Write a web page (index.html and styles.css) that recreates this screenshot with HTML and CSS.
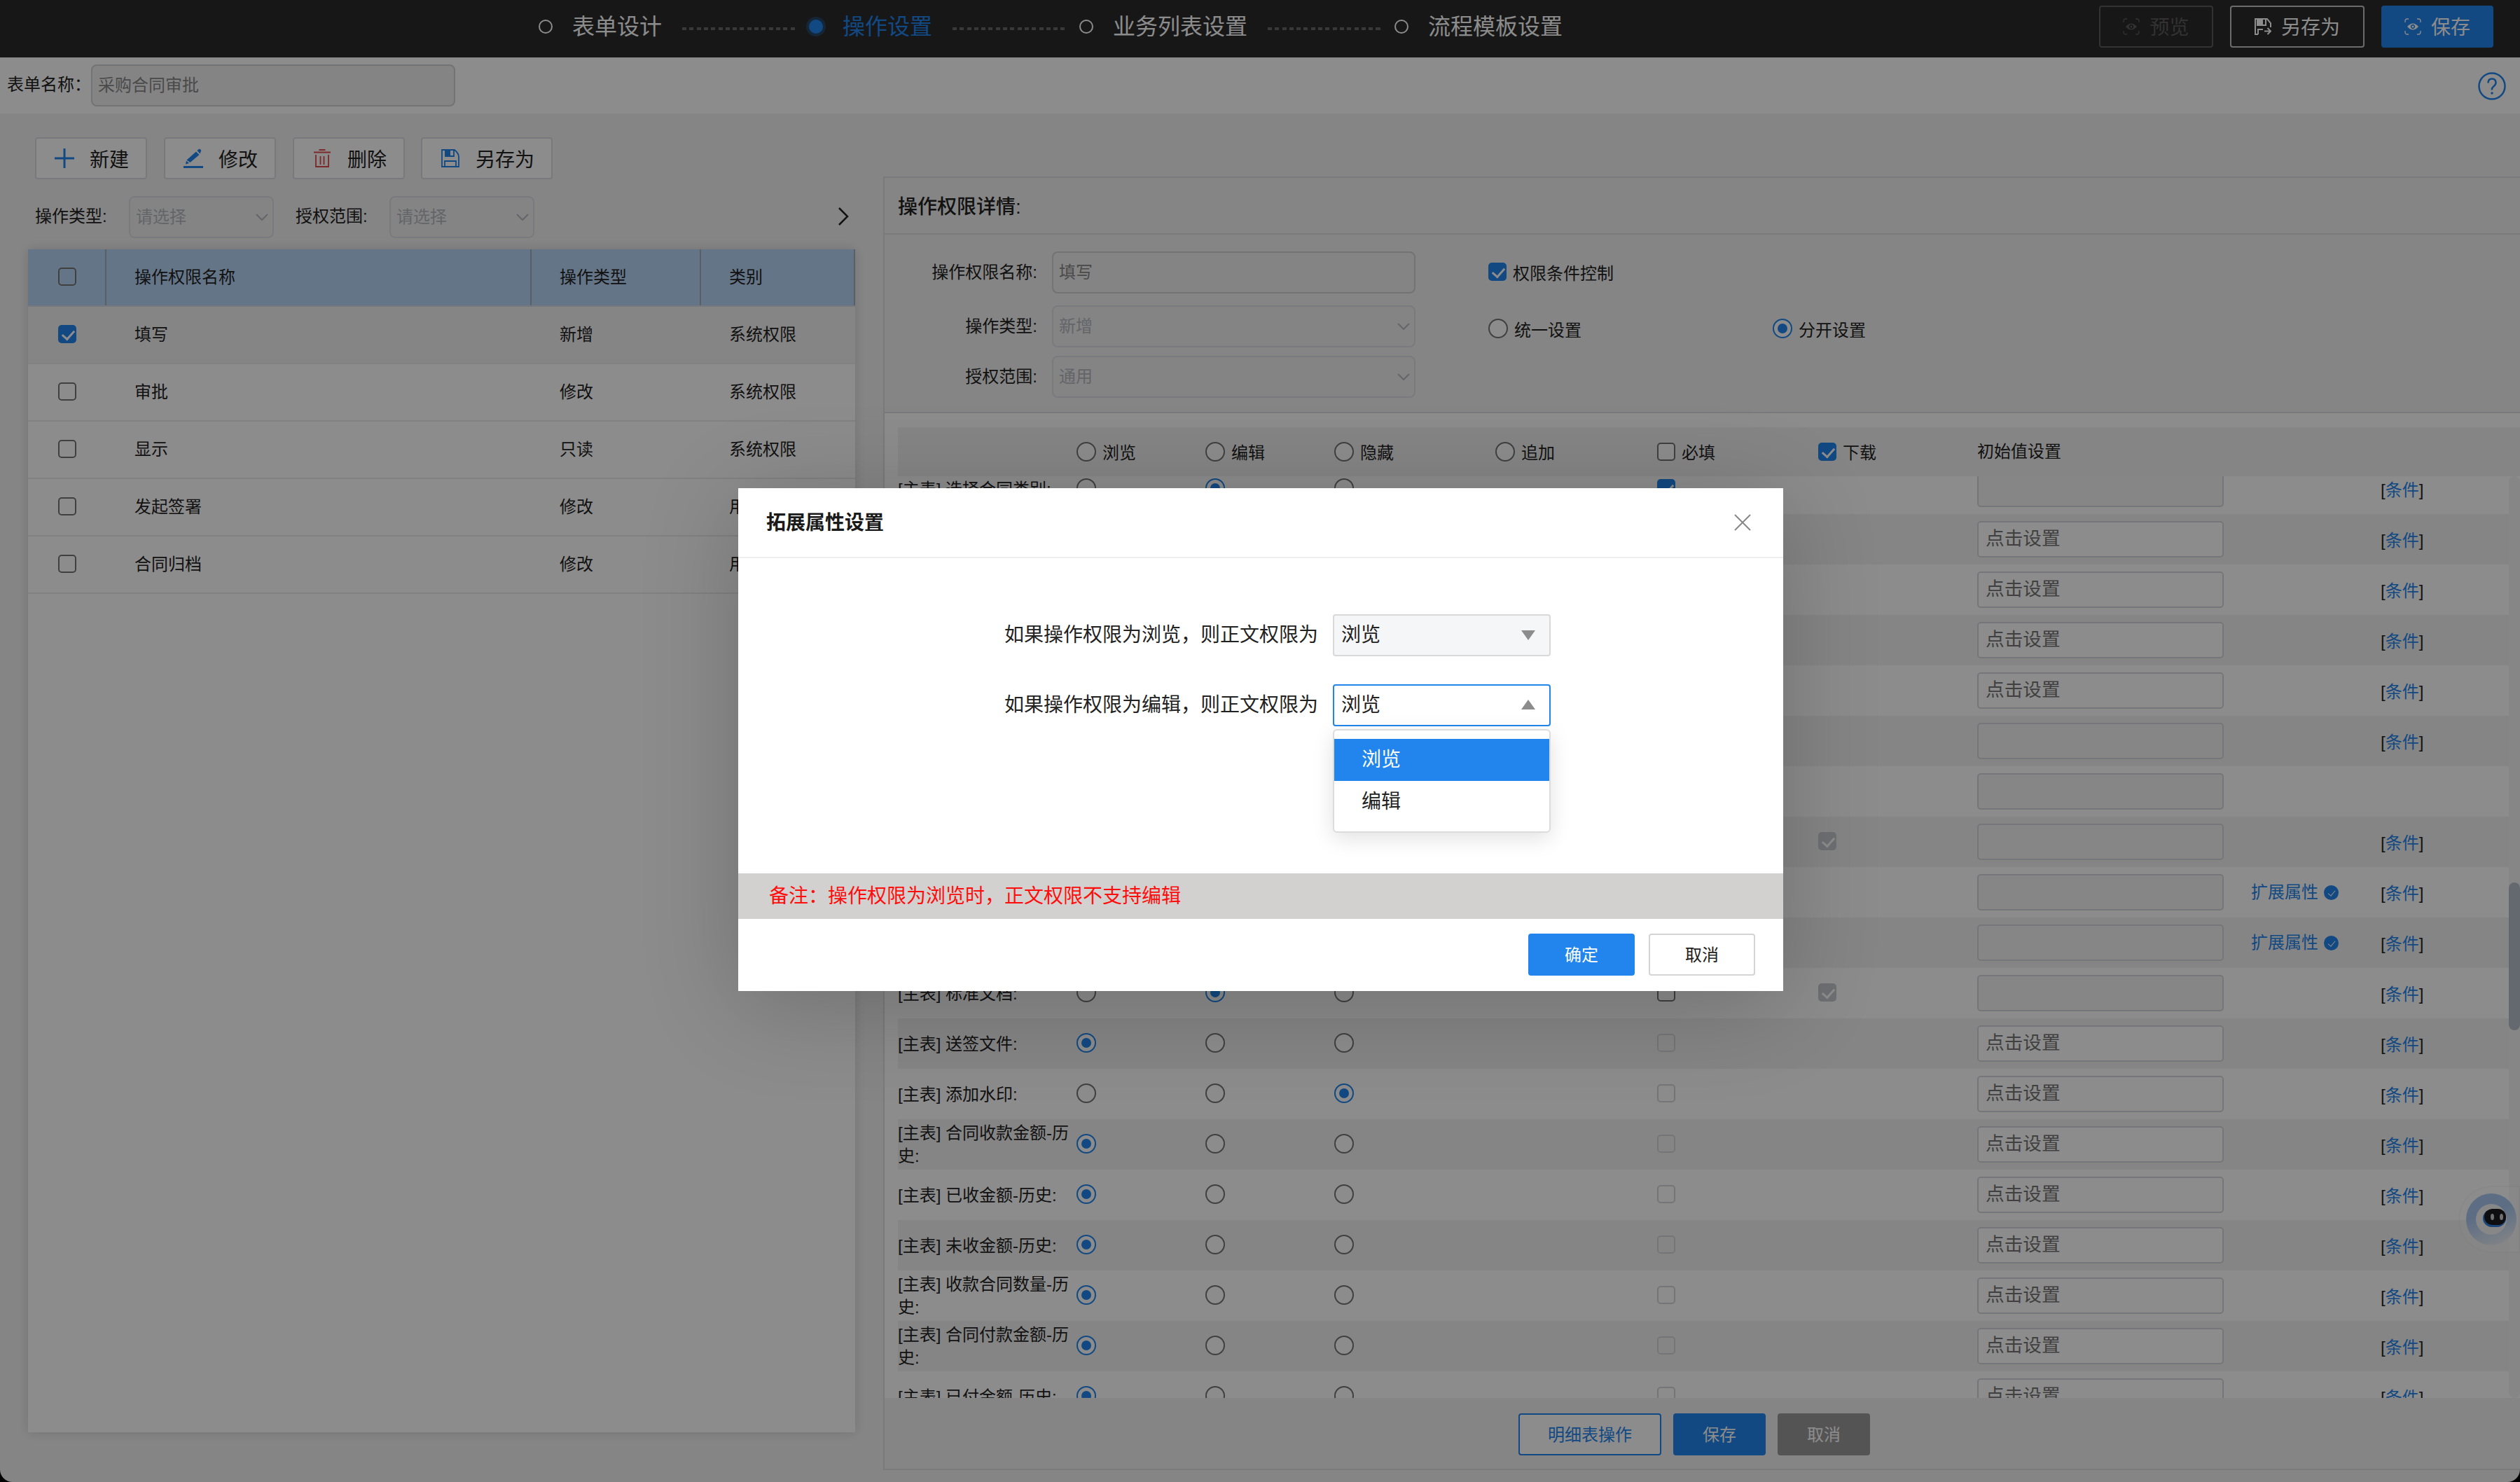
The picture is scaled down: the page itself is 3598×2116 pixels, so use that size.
FILE: index.html
```html
<!DOCTYPE html>
<html lang="zh-CN">

<head>
    <meta charset="UTF-8">
    <meta name="viewport" content="width=device-width, initial-scale=1.0">
    <title>操作设置</title>
    <link rel="stylesheet" href="styles.css">
</head>

<body>
    <div class="page">
        <div class="topbar">
            <div class="steps">
                <div class="step"><i class="dot"></i><span>表单设计</span></div>
                <div class="line"></div>
                <div class="step active"><i class="dot"></i><span>操作设置</span></div>
                <div class="line"></div>
                <div class="step"><i class="dot"></i><span>业务列表设置</span></div>
                <div class="line"></div>
                <div class="step"><i class="dot"></i><span>流程模板设置</span></div>
            </div>
            <div class="top-actions">
                <button class="top-btn preview">
                    <svg viewBox="0 0 24 24"><path class="stroke thin" d="M1 6V4q0-3 3-3h2M18 1h2q3 0 3 3v2M23 18v2q0 3-3 3h-2M6 23H4q-3 0-3-3v-2"/><path class="fill" fill-rule="evenodd" d="M4 12q8-9 16 0q-8 9-16 0zM12 8.800a3.200 3.200 0 1 0 .01 0z"/><circle class="fill" cx="12" cy="12" r="1.500"/></svg>
                    <span>预览</span>
                </button>
                <button class="top-btn saveas">
                    <svg viewBox="0 0 24 24"><path class="stroke" d="M5 23H1V1h17l5 6v6M4 1v9h12V1M5 23v-7h7M14 18.500h9M18.500 14l4.500 4.500-4.500 4.500"/><path class="fill" d="M4 1h8v8H4z"/></svg>
                    <span>另存为</span>
                </button>
                <button class="top-btn primary">
                    <svg viewBox="0 0 24 24"><path class="stroke thin" d="M1 6V4q0-3 3-3h2M18 1h2q3 0 3 3v2M23 18v2q0 3-3 3h-2M6 23H4q-3 0-3-3v-2"/><path class="fill" fill-rule="evenodd" d="M4 12q8-9 16 0q-8 9-16 0zM12 8.800a3.200 3.200 0 1 0 .01 0z"/><circle class="fill" cx="12" cy="12" r="1.500"/></svg>
                    <span>保存</span>
                </button>
            </div>
        </div>

        <div class="namebar">
            <label>表单名称：</label>
            <div class="field form-name">采购合同审批</div>
            <svg class="help" viewBox="0 0 40 40"><circle cx="20" cy="20" r="18.500"/><path d="M14.500 15.500q0-6 5.500-6t5.500 5.500q0 3-3 5.200t-2.500 5.300"/><circle class="point" cx="20" cy="30" r="1.800"/></svg>
        </div>

        <div class="content">
            <div class="left">
                <div class="toolbar">
                    <button><svg viewBox="0 0 28 28"><path d="M14 0v28M0 14h28" stroke-width="3"/></svg>新建</button>
                    <button><svg viewBox="0 0 28 28"><path d="M0 26.500h28" stroke-width="3"/><path class="solid" d="M18 4.500l4.500 4.500L9.500 20l-5-3.500zM19.500 3l1.500-1.500q2-1.500 3.500 0t0 3.500L23.500 7.500zM4 17.500l4 3.500-5 1.500z"/></svg>修改</button>
                    <button class="danger"><svg viewBox="0 0 28 28"><path d="M2 5.500h24M9.500 2h9M5 9v17h18V9M11.500 11v12M16.500 11v12" stroke-width="1.800"/></svg>删除</button>
                    <button><svg viewBox="0 0 28 28"><path d="M2 2h18q6 5 6 10v14H2zM6 26v-8h16v8M19 2v9H7V2" stroke-width="1.800"/><path class="solid" d="M6 2h8v9H6z"/></svg>另存为</button>
                </div>
                <div class="filters">
                    <label>操作类型:</label>
                    <div class="field select">请选择<svg viewBox="0 0 18 10"><path d="M1 1l8 8 8-8"/></svg></div>
                    <label>授权范围:</label>
                    <div class="field select">请选择<svg viewBox="0 0 18 10"><path d="M1 1l8 8 8-8"/></svg></div>
                    <svg class="expand" viewBox="0 0 16 26"><path d="M2 1l12 12L2 25"/></svg>
                </div>
                <div class="perm-table">
                    <div class="perm-row head">
                        <div><i class="check"></i></div>
                        <div>操作权限名称</div>
                        <div>操作类型</div>
                        <div>类别</div>
                    </div>
                    <div class="perm-row selected">
                        <div><i class="check on"></i></div>
                        <div>填写</div>
                        <div>新增</div>
                        <div>系统权限</div>
                    </div>
                    <div class="perm-row">
                        <div><i class="check"></i></div>
                        <div>审批</div>
                        <div>修改</div>
                        <div>系统权限</div>
                    </div>
                    <div class="perm-row">
                        <div><i class="check"></i></div>
                        <div>显示</div>
                        <div>只读</div>
                        <div>系统权限</div>
                    </div>
                    <div class="perm-row">
                        <div><i class="check"></i></div>
                        <div>发起签署</div>
                        <div>修改</div>
                        <div>用户权限</div>
                    </div>
                    <div class="perm-row">
                        <div><i class="check"></i></div>
                        <div>合同归档</div>
                        <div>修改</div>
                        <div>用户权限</div>
                    </div>
                </div>
            </div>

            <div class="right">
                <div class="detail-title">操作权限详情:</div>
                <div class="detail-form">
                    <div class="form-col">
                        <div class="form-row"><label>操作权限名称:</label><div class="field plain">填写</div></div>
                        <div class="form-row"><label>操作类型:</label><div class="field select">新增<svg viewBox="0 0 18 10"><path d="M1 1l8 8 8-8"/></svg></div></div>
                        <div class="form-row"><label>授权范围:</label><div class="field select">通用<svg viewBox="0 0 18 10"><path d="M1 1l8 8 8-8"/></svg></div></div>
                    </div>
                    <div class="option-col">
                        <div class="option"><i class="check on"></i><span>权限条件控制</span></div>
                        <div class="options">
                            <div class="option"><i class="radio"></i><span>统一设置</span></div>
                            <div class="option"><i class="radio on"></i><span>分开设置</span></div>
                        </div>
                    </div>
                </div>
                <div class="fields">
                    <div class="field-row field-head">
                        <div></div>
                        <div class="option"><i class="radio"></i><span>浏览</span></div>
                        <div class="option"><i class="radio"></i><span>编辑</span></div>
                        <div class="option"><i class="radio"></i><span>隐藏</span></div>
                        <div class="option"><i class="radio"></i><span>追加</span></div>
                        <div class="option"><i class="check"></i><span>必填</span></div>
                        <div class="option"><i class="check on"></i><span>下载</span></div>
                        <div>初始值设置</div>
                    </div>
                    <div class="field-scroll">
                        <div class="field-list" id="field-list"></div>
                        <div class="scrollbar"><div class="thumb"></div></div>
                    </div>
                </div>
                <div class="detail-footer">
                    <button class="btn outline">明细表操作</button>
                    <button class="btn primary">保存</button>
                    <button class="btn gray">取消</button>
                </div>
            </div>
        </div>

        <div class="robot">
            <div class="robot-ring"><div class="robot-head"><div class="robot-face"><i></i><i></i></div></div></div>
        </div>
    </div>

    <div class="mask">
        <div class="modal">
            <div class="modal-header">
                <h3>拓展属性设置</h3>
                <svg class="close" viewBox="0 0 24 24"><path d="M1 1l22 22M23 1L1 23"/></svg>
            </div>
            <div class="modal-body">
                <div class="rule">
                    <span>如果操作权限为浏览，则正文权限为</span>
                    <div class="picker">浏览<i class="down"></i></div>
                </div>
                <div class="rule">
                    <span>如果操作权限为编辑，则正文权限为</span>
                    <div class="picker open">浏览<i class="up"></i>
                        <div class="menu">
                            <div class="menu-item current">浏览</div>
                            <div class="menu-item">编辑</div>
                        </div>
                    </div>
                </div>
            </div>
            <div class="note">备注：操作权限为浏览时，正文权限不支持编辑</div>
            <div class="modal-footer">
                <button class="btn primary">确定</button>
                <button class="btn">取消</button>
            </div>
        </div>
    </div>

    <script src="script.js"></script>
</body>

</html>
```

FILE: styles.css
```css
* {
    margin: 0;
    padding: 0;
    box-sizing: border-box;
}

body {
    background-color: #000;
    font-family: "Liberation Sans", "Noto Sans CJK SC", sans-serif;
    font-size: 24px;
    line-height: 1.4;
    color: #222;
    overflow: hidden;
}

button {
    font-family: inherit;
    font-size: inherit;
    color: inherit;
}

svg {
    fill: none;
    flex: none;
}

.page {
    width: 3598px;
    height: 2116px;
    display: flex;
    flex-direction: column;
    background-color: #f3f3f3;
    border-radius: 0 0 18px 18px;
    overflow: hidden;
}

/* top bar */
.topbar {
    height: 82px;
    flex: none;
    display: flex;
    justify-content: space-between;
    align-items: flex-start;
    background-color: #2a2a2a;
    padding: 8px 38px 0 769px;
    color: #fff;
}

.steps {
    display: flex;
    align-items: center;
    height: 61px;
}

.step {
    display: flex;
    align-items: center;
    gap: 28px;
    font-size: 32px;
    margin-right: 1px;
}

.step .dot {
    width: 20px;
    height: 20px;
    border: 2px solid #fff;
    border-radius: 50%;
}

.step.active {
    color: #2185ed;
}

.step.active .dot {
    background-color: #2185ed;
    border-color: #2185ed;
    box-shadow: 0 0 0 4px rgba(33, 133, 237, 0.3);
}

.line {
    width: 161px;
    height: 4px;
    margin: 5px 20px 0 28px;
    background: repeating-linear-gradient(90deg, #666 0 6px, transparent 6px 10.300px);
}

.top-actions {
    display: flex;
}

.top-btn {
    height: 60px;
    display: flex;
    align-items: center;
    justify-content: center;
    gap: 14px;
    background: none;
    border: 2px solid #fff;
    border-radius: 4px;
    font-size: 28px;
}

.top-btn svg {
    width: 24px;
    height: 24px;
}

.top-btn span {
    margin-top: -2px;
}

.top-btn .stroke {
    stroke: currentColor;
    stroke-width: 2;
}

.top-btn .thin {
    stroke-width: 1.300;
}

.top-btn .fill {
    fill: currentColor;
}

.top-btn.preview {
    width: 163px;
    color: #5c5c5c;
    border-color: #5c5c5c;
}

.top-btn.saveas {
    width: 192px;
    margin: 0 24px;
    border-color: #c4c4c4;
}

.top-btn.primary {
    width: 160px;
    background-color: #2185ed;
    border-color: #2185ed;
}

/* form name */
.namebar {
    height: 80px;
    flex: none;
    display: flex;
    align-items: center;
    background-color: #fff;
    padding: 0 20px 0 10px;
}

.namebar label {
    width: 120px;
    margin-top: -2px;
}

.help {
    width: 40px;
    height: 40px;
    margin-left: auto;
    margin-top: 2px;
    stroke: #2185ed;
    stroke-width: 2.500;
}

.help .point {
    fill: #2185ed;
    stroke: none;
}

.field {
    height: 60px;
    display: flex;
    align-items: center;
    justify-content: space-between;
    padding: 0 10px 0 8px;
    border: 2px solid #dcdfe6;
    border-radius: 8px;
    background-color: #f1f1f1;
    color: #888;
}

.field.select {
    color: #b4b8c0;
    padding-right: 6px;
}

.field svg {
    width: 18px;
    height: 10px;
    stroke: #b4b8c0;
    stroke-width: 2;
}

.form-name {
    width: 520px;
    border-color: #cfd1d6;
}

.field.plain {
    border-color: #cfd1d6;
}

/* shared marks */
.check,
.radio {
    display: block;
    flex: none;
    position: relative;
    border: 2px solid #767676;
    background-color: #fff;
}

.check {
    width: 26px;
    height: 26px;
    border-radius: 5px;
}

.check.on {
    background-color: #2185ed;
    border-color: #2185ed;
}

.check.on::after {
    content: "";
    position: absolute;
    left: 7px;
    top: 2px;
    width: 8px;
    height: 14px;
    border: solid #fff;
    border-width: 0 3px 3px 0;
    transform: rotate(42deg);
}

.check.disabled {
    border-color: #d5d6da;
    background-color: transparent;
}

.check.on.disabled {
    background-color: #c9cbd1;
    border-color: #c9cbd1;
}

.radio {
    width: 28px;
    height: 28px;
    border-radius: 50%;
}

.radio.on {
    border-color: #2185ed;
}

.radio.on::after {
    content: "";
    position: absolute;
    left: 5px;
    top: 5px;
    width: 14px;
    height: 14px;
    border-radius: 50%;
    background-color: #2185ed;
}

.option {
    display: flex;
    align-items: center;
    gap: 9px;
}

.option span {
    margin-top: 5px;
}

/* left list */
.content {
    flex: 1;
    min-height: 0;
    display: flex;
}

.left {
    width: 1221px;
    padding: 34px 0 71px 40px;
    display: flex;
    flex-direction: column;
}

.toolbar {
    display: flex;
    gap: 24px;
    padding-left: 10px;
}

.toolbar button {
    height: 60px;
    display: flex;
    align-items: center;
    gap: 22px;
    padding: 0 24px 0 26px;
    border: 2px solid #dcdde4;
    border-radius: 4px;
    background-color: #fff;
    font-size: 28px;
}

.toolbar button:last-child {
    margin-left: -1px;
}

.toolbar svg {
    width: 28px;
    height: 28px;
    stroke: #2185ed;
}

.toolbar .solid {
    fill: #2185ed;
    stroke: none;
}

.toolbar .danger svg {
    stroke: #e24a4a;
}

.filters {
    display: flex;
    align-items: center;
    height: 60px;
    margin: 24px 0 16px;
    padding: 0 9px 0 10px;
}

.filters .select {
    width: 207px;
    margin-right: 31px;
}

.filters label {
    width: 134px;
    margin-top: -2px;
}

.expand {
    width: 16px;
    height: 26px;
    margin-left: auto;
    margin-top: -2px;
    stroke: #222;
    stroke-width: 2.500;
}

.perm-table {
    flex: 1;
    background-color: #fff;
    box-shadow: 0 0 16px rgba(0, 0, 0, 0.14);
}

.perm-row {
    height: 82px;
    display: grid;
    grid-template-columns: 112px 607px 242px 220px;
    align-items: center;
    border-bottom: 2px solid #ebebeb;
}

.perm-row > div {
    height: 100%;
    display: flex;
    align-items: center;
    padding-left: 40px;
}

.perm-row > div:first-child {
    padding-left: 43px;
}

.perm-row.head {
    background-color: #b9d6f8;
    border-bottom-color: #d5dbe3;
}

.perm-row.head > div {
    border-right: 2px solid #a3adb8;
}

.perm-row .check {
    margin-bottom: 2px;
}

.perm-row.head .check {
    background: none;
}

.perm-row.selected {
    background-color: #f2f2f2;
}

/* right detail */
.right {
    margin: 90px 0 17px 40px;
    flex: 1;
    min-width: 0;
    display: flex;
    flex-direction: column;
    border: 2px solid #dfdfe4;
    border-right: none;
}

.detail-title {
    height: 81px;
    flex: none;
    line-height: 83px;
    padding-left: 19px;
    font-size: 28px;
    font-weight: 500;
    border-bottom: 2px solid #dfdfe4;
}

.detail-form {
    height: 255px;
    flex: none;
    display: flex;
    padding-top: 24px;
    border-bottom: 2px solid #dfdfe4;
}

.form-col {
    width: 862px;
}

.form-row {
    display: flex;
    align-items: center;
    margin-bottom: 12px;
}

.form-row:first-child {
    margin-bottom: 17px;
}

.form-row label {
    width: 218px;
    margin-right: 21px;
    text-align: right;
}

.form-row .field {
    width: 519px;
}

.option-col {
    padding-top: 10px;
}

.options {
    display: flex;
    gap: 273px;
    margin-top: 42px;
}

.fields {
    flex: 1;
    min-height: 0;
    display: flex;
    flex-direction: column;
    padding: 20px 0 0 19px;
    background-color: #fff;
}

.field-row {
    height: 72px;
    display: grid;
    grid-template-columns: 255px 184px 184px 230px 231px 230px 227px 391px 185px 1fr;
    align-items: center;
}

.field-head {
    height: 70px;
    background-color: #f3f3f3;
    flex: none;
    padding-bottom: 1px;
}

.field-scroll {
    flex: 1;
    min-height: 0;
    display: flex;
    overflow: hidden;
}

.field-list {
    flex: 1;
    margin-top: -18px;
}

.field-list .field-row:nth-child(even) {
    background-color: #f3f3f3;
}

.field-list .check,
.field-list .radio {
    margin-bottom: 2px;
}

.field-label {
    line-height: 33px;
    padding-right: 9px;
}

.field-input {
    width: 352px;
    height: 52px;
    line-height: 47px;
    padding-left: 10px;
    border: 2px solid #d6d7dd;
    border-radius: 5px;
    background-color: #fff;
    font-size: 26.670px;
    color: #757575;
}

.field-input.disabled {
    background-color: #f5f5f5;
}

.ext {
    display: flex;
    align-items: center;
    gap: 8px;
    color: #2185ed;
}

.ext i {
    width: 21px;
    height: 21px;
    border-radius: 50%;
    background-color: #2185ed;
    position: relative;
}

.ext i::after {
    content: "";
    position: absolute;
    left: 8px;
    top: 5px;
    width: 5px;
    height: 9px;
    border: solid #fff;
    border-width: 0 1.500px 1.500px 0;
    transform: rotate(40deg);
}

.cond {
    padding-top: 3px;
}

.cond a {
    color: #2185ed;
}

.scrollbar {
    width: 16px;
    background-color: #f5f5f5;
    border-radius: 8px;
    padding-top: 580px;
}

.thumb {
    height: 211px;
    border-radius: 8px;
    background-color: #b7bfcc;
}

.detail-footer {
    height: 101px;
    flex: none;
    display: flex;
    gap: 17px;
    padding: 22px 0 0 905px;
}

.btn {
    height: 60px;
    min-width: 132px;
    padding-bottom: 3px;
    border: 2px solid #d4d4d4;
    border-radius: 4px;
    background-color: #fff;
}

.btn.primary {
    background-color: #2185ed;
    border-color: #2185ed;
    color: #fff;
}

.btn.outline {
    width: 204px;
    border-color: #2185ed;
    color: #2185ed;
}

.btn.gray {
    background-color: #999;
    border-color: #999;
    color: #fff;
}

/* assistant floats over the right edge */
.robot {
    position: absolute;
    right: 0;
    top: 1693px;
    width: 88px;
    height: 96px;
    border-radius: 48px 0 0 48px;
    background-color: rgba(255, 255, 255, 0.2);
    border: 2px solid rgba(0, 0, 0, 0.03);
    padding: 9px 0 0 9px;
}

.robot-ring {
    width: 72px;
    height: 74px;
    border-radius: 50%;
    background: linear-gradient(160deg, #a9c8f0 40%, #f0f2f5 95%);
    padding: 15px 0 0 14px;
}

.robot-head {
    width: 44px;
    height: 44px;
    border-radius: 50%;
    background-color: #f6f6f6;
    padding: 7px 0 0 12px;
}

.robot-face {
    width: 31px;
    height: 23px;
    border-radius: 12px;
    background-color: #1b1b20;
    box-shadow: -1px 2px 0 1px #2f7fdc;
    display: flex;
    justify-content: center;
    align-items: center;
    gap: 8px;
    padding-left: 4px;
}

.robot-face i {
    width: 5px;
    height: 9px;
    border-radius: 50%;
    background-color: #ccc;
}

/* modal */
.mask {
    position: absolute;
    top: 0;
    left: 0;
    width: 3598px;
    height: 2116px;
    display: flex;
    justify-content: center;
    align-items: flex-start;
    padding: 697px 0 0 2px;
    background-color: rgba(0, 0, 0, 0.45);
}

.modal {
    width: 1492px;
    height: 718px;
    display: flex;
    flex-direction: column;
    background-color: #fff;
    box-shadow: 0 20px 130px rgba(0, 0, 0, 0.2);
    font-size: 28px;
}

.modal-header {
    height: 100px;
    display: flex;
    justify-content: space-between;
    align-items: center;
    padding: 0 46px 0 40px;
    border-bottom: 2px solid #eee;
}

.modal-header h3 {
    font-size: 28px;
    color: #1a1a1a;
    margin-top: 2px;
}

.close {
    width: 24px;
    height: 24px;
    stroke: #888;
    stroke-width: 2;
}

.modal-body {
    flex: 1;
    padding: 80px 0 0 380px;
}

.rule {
    display: flex;
    align-items: center;
    gap: 21px;
    margin-bottom: 40px;
}

.picker {
    position: relative;
    width: 311px;
    height: 60px;
    display: flex;
    align-items: center;
    justify-content: space-between;
    padding: 0 20px 0 10px;
    border: 2px solid #d9d9d9;
    border-radius: 4px;
    background-color: #f4f6f8;
}

.picker.open {
    border-color: #2185ed;
    background-color: #fff;
}

.down,
.up {
    border: 10px solid transparent;
    border-top: 14px solid #8c8c8c;
    border-bottom: none;
}

.up {
    border-top: none;
    border-bottom: 14px solid #8c8c8c;
    margin-bottom: 3px;
}

.menu {
    position: absolute;
    left: -2px;
    top: 62px;
    width: 311px;
    height: 148px;
    padding-top: 12px;
    border: 2px solid #dcdcdc;
    border-radius: 6px;
    background-color: #fff;
    box-shadow: 0 8px 30px rgba(0, 0, 0, 0.12);
}

.menu-item {
    height: 60px;
    line-height: 60px;
    padding-left: 39px;
}

.menu-item.current {
    background-color: #2185ed;
    color: #fff;
}

.note {
    height: 65px;
    line-height: 65px;
    padding-left: 44px;
    background-color: #d3d1cf;
    color: #ff0d0d;
}

.modal-footer {
    height: 103px;
    display: flex;
    justify-content: flex-end;
    gap: 20px;
    padding: 21px 40px 0 0;
    font-size: 24px;
}

.modal-footer .btn {
    width: 152px;
}
```

FILE: script.js
```js
// mode: 0 = 浏览, 1 = 编辑, 2 = 隐藏
const fields = [
    { name: "选择合同类别", mode: 1, required: "on" },
    { name: "", mode: 1, required: "", click: true },
    { name: "", mode: 1, required: "", click: true },
    { name: "", mode: 1, required: "", click: true },
    { name: "", mode: 1, required: "", click: true },
    { name: "", mode: 1, required: "" },
    { name: "", mode: 1, required: "", noCond: true },
    { name: "", mode: 1, required: "", download: true },
    { name: "", mode: 1, required: "", ext: true },
    { name: "", mode: 1, required: "", ext: true },
    { name: "标准文档", mode: 1, required: "", download: true },
    { name: "送签文件", mode: 0, required: "disabled", click: true },
    { name: "添加水印", mode: 2, required: "disabled", click: true },
    { name: "合同收款金额-历史", mode: 0, required: "disabled", click: true },
    { name: "已收金额-历史", mode: 0, required: "disabled", click: true },
    { name: "未收金额-历史", mode: 0, required: "disabled", click: true },
    { name: "收款合同数量-历史", mode: 0, required: "disabled", click: true },
    { name: "合同付款金额-历史", mode: 0, required: "disabled", click: true },
    { name: "已付金额-历史", mode: 0, required: "disabled", click: true }
];

const list = document.getElementById("field-list");

fields.forEach(field => {
    const row = document.createElement("div");
    row.classList.add("field-row");

    const radios = [0, 1, 2].map(i => `<div><i class="radio ${field.mode === i ? "on" : ""}"></i></div>`).join("");

    row.innerHTML = `
        <div class="field-label">${field.name ? `[主表] ${field.name}:` : ""}</div>
        ${radios}
        <div></div>
        <div><i class="check ${field.required}"></i></div>
        <div>${field.download ? '<i class="check on disabled"></i>' : ""}</div>
        <div class="field-input ${field.click ? "" : "disabled"}">${field.click ? "点击设置" : ""}</div>
        <div class="ext">${field.ext ? "扩展属性<i></i>" : ""}</div>
        <div class="cond">${field.noCond ? "" : "[<a>条件</a>]"}</div>
    `;

    list.appendChild(row);
});
```
